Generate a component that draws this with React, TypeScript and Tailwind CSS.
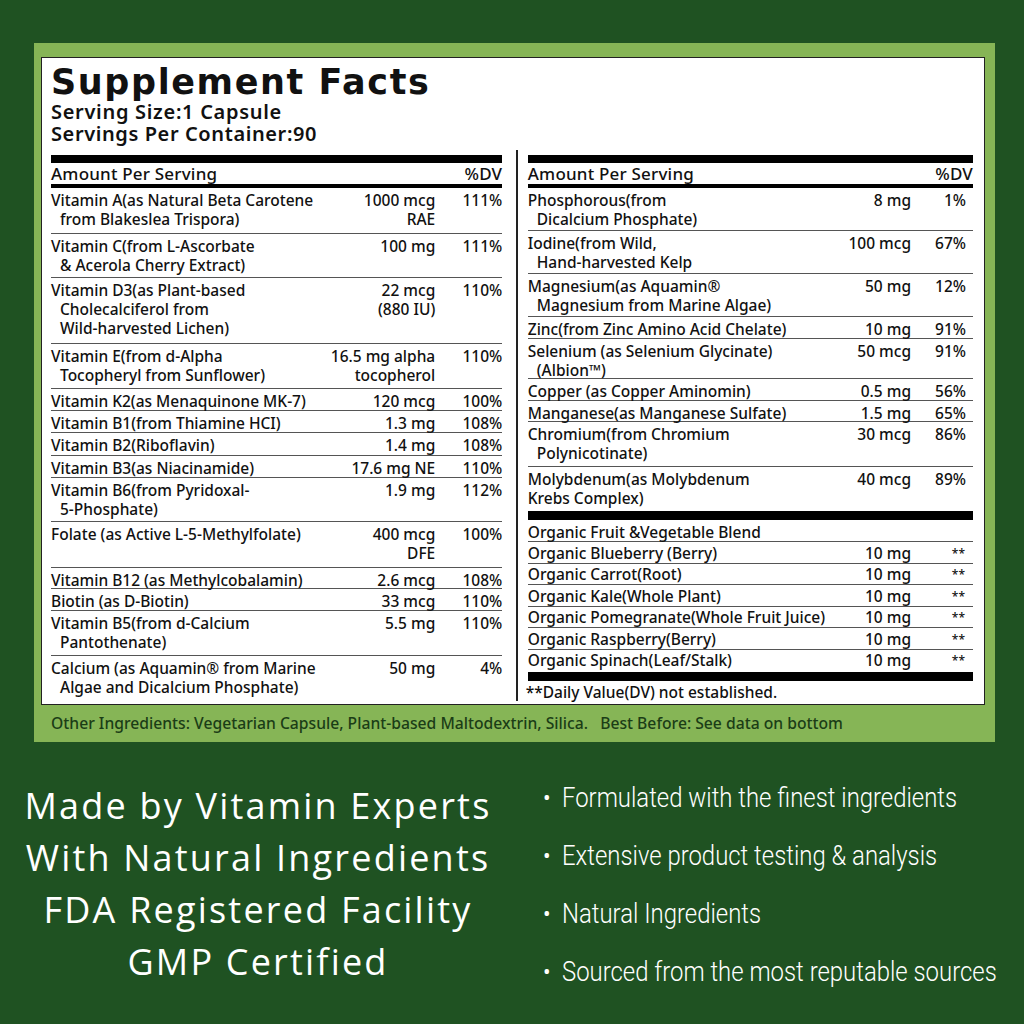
import React from 'react';

type Row = { n: string[]; a: string[]; d: string; h: string; last?: boolean; flat?: boolean };

const LEFT: Row[] = [
  { n: ['Vitamin A(as Natural Beta Carotene', 'from Blakeslea Trispora)'], a: ['1000 mcg', 'RAE'], d: '111%', h: 'h-[46px]' },
  { n: ['Vitamin C(from L-Ascorbate', '& Acerola Cherry Extract)'], a: ['100 mg'], d: '111%', h: 'h-[44px]' },
  { n: ['Vitamin D3(as Plant-based', 'Cholecalciferol from', 'Wild-harvested Lichen)'], a: ['22 mcg', '(880 IU)'], d: '110%', h: 'h-[66px]' },
  { n: ['Vitamin E(from d-Alpha', 'Tocopheryl from Sunflower)'], a: ['16.5 mg alpha', 'tocopherol'], d: '110%', h: 'h-[45px]' },
  { n: ['Vitamin K2(as Menaquinone MK-7)'], a: ['120 mcg'], d: '100%', h: 'h-[22px]' },
  { n: ['Vitamin B1(from Thiamine HCI)'], a: ['1.3 mg'], d: '108%', h: 'h-[22px]' },
  { n: ['Vitamin B2(Riboflavin)'], a: ['1.4 mg'], d: '108%', h: 'h-[23px]' },
  { n: ['Vitamin B3(as Niacinamide)'], a: ['17.6 mg NE'], d: '110%', h: 'h-[22px]' },
  { n: ['Vitamin B6(from Pyridoxal-', '5-Phosphate)'], a: ['1.9 mg'], d: '112%', h: 'h-[44px]' },
  { n: ['Folate (as Active L-5-Methylfolate)'], a: ['400 mcg', 'DFE'], d: '100%', h: 'h-[46px]' },
  { n: ['Vitamin B12 (as Methylcobalamin)'], a: ['2.6 mcg'], d: '108%', h: 'h-[21px]' },
  { n: ['Biotin (as D-Biotin)'], a: ['33 mcg'], d: '110%', h: 'h-[22px]' },
  { n: ['Vitamin B5(from d-Calcium', 'Pantothenate)'], a: ['5.5 mg'], d: '110%', h: 'h-[45px]' },
  { n: ['Calcium (as Aquamin® from Marine', 'Algae and Dicalcium Phosphate)'], a: ['50 mg'], d: '4%', h: 'h-[45px]', last: true },
];

const RIGHT: Row[] = [
  { n: ['Phosphorous(from', 'Dicalcium Phosphate)'], a: ['8 mg'], d: '1%', h: 'h-[43px]' },
  { n: ['Iodine(from Wild,', 'Hand-harvested Kelp'], a: ['100 mcg'], d: '67%', h: 'h-[43px]' },
  { n: ['Magnesium(as Aquamin®', 'Magnesium from Marine Algae)'], a: ['50 mg'], d: '12%', h: 'h-[43px]' },
  { n: ['Zinc(from Zinc Amino Acid Chelate)'], a: ['10 mg'], d: '91%', h: 'h-[22px]' },
  { n: ['Selenium (as Selenium Glycinate)', '(Albion™)'], a: ['50 mcg'], d: '91%', h: 'h-[40px]' },
  { n: ['Copper (as Copper Aminomin)'], a: ['0.5 mg'], d: '56%', h: 'h-[22px]' },
  { n: ['Manganese(as Manganese Sulfate)'], a: ['1.5 mg'], d: '65%', h: 'h-[21px]' },
  { n: ['Chromium(from Chromium', 'Polynicotinate)'], a: ['30 mcg'], d: '86%', h: 'h-[45px]' },
  { n: ['Molybdenum(as Molybdenum', 'Krebs Complex)'], a: ['40 mcg'], d: '89%', h: 'h-[44px]', last: true, flat: true },
];

const BLEND = [
  'Organic Blueberry (Berry)',
  'Organic Carrot(Root)',
  'Organic Kale(Whole Plant)',
  'Organic Pomegranate(Whole Fruit Juice)',
  'Organic Raspberry(Berry)',
  'Organic Spinach(Leaf/Stalk)',
];

const BULLETS = [
  'Formulated with the finest ingredients',
  'Extensive product testing & analysis',
  'Natural Ingredients',
  'Sourced from the most reputable sources',
];

const FactRow = ({ r, dvW }: { r: Row; dvW: string }) => (
  <div className={`flex pt-[2.5px] ${r.h} ${r.last ? '' : 'border-b-[1.5px] border-[#555]'}`}>
    <div className="flex-1 whitespace-nowrap">
      {r.n.map((t, i) => (
        <div key={i} className={i > 0 && !r.flat ? 'pl-[9px]' : ''}>{t}</div>
      ))}
    </div>
    <div className="text-right whitespace-nowrap">
      {r.a.map((t, i) => <div key={i}>{t}</div>)}
    </div>
    <div className={`${dvW} text-right`}>{r.d}</div>
  </div>
);

const TableHead = () => (
  <>
    <div className="h-[8px] bg-black" />
    <div className="flex h-[21px] items-center justify-between text-[17px] tracking-[0.2px]">
      <span>Amount Per Serving</span>
      <span>%DV</span>
    </div>
    <div className="h-[4px] bg-black" />
  </>
);

export default function App() {
  return (
    <div className="w-[1024px] h-[1024px] bg-[#1f5222] pt-[43px] font-['Noto_Sans',sans-serif]">
      <div className="ml-[34px] w-[961px] bg-[#86b556] pt-[14px] pl-[7px] pr-[10px]">
        <div className="h-[648px] border border-[#222] bg-white pl-[9px] pr-[11px] text-[15.5px] leading-[19px] font-medium text-[#111]">
          <div className="pt-[4px] leading-none">
            <div className="text-[35px] font-bold font-['DejaVu_Sans',sans-serif] leading-[40px] tracking-[1.6px]">Supplement Facts</div>
            <div className="text-[20px] font-semibold leading-[22px] mt-[-1px] tracking-[0.7px]">Serving Size:1 Capsule</div>
            <div className="text-[20px] font-semibold leading-[22px] tracking-[0.6px]">Servings Per Container:90</div>
          </div>
          <div className="flex mt-[5px] h-[554px]">
            <div className="w-[452px] pt-[5px]">
              <TableHead />
              {LEFT.map((r, i) => <FactRow key={i} r={r} dvW="w-[67px]" />)}
            </div>
            <div className="ml-[14px] mr-[10px] w-[1.5px] bg-[#222] mb-[3px]" />
            <div className="w-[446px] pt-[5px]">
              <TableHead />
              {RIGHT.map((r, i) => <FactRow key={i} r={r} dvW="w-[62px] pr-[7px]" />)}
              <div className="h-[9px] bg-black" />
              <div className="h-[22px] pt-[2.5px] border-b-[1.5px] border-[#555]">Organic Fruit &amp;Vegetable Blend</div>
              {BLEND.map((t, i) => (
                <div key={i} className={`flex h-[21.5px] pt-[1.5px] ${i < BLEND.length - 1 ? 'border-b-[1.5px] border-[#555]' : ''}`}>
                  <div className="flex-1 whitespace-nowrap">{t}</div>
                  <div className="w-[70px] text-right">10 mg</div>
                  <div className="w-[62px] pr-[8px] text-right text-[12px]">**</div>
                </div>
              ))}
              <div className="h-[9px] bg-black mt-[1px]" />
              <div className="pt-[2px] -ml-[2px]">**Daily Value(DV) not established.</div>
            </div>
          </div>
        </div>
        <div className="h-[37px] flex items-center pl-[10px] text-[15.7px] font-medium text-[#1b3d16] whitespace-pre">
          Other Ingredients: Vegetarian Capsule, Plant-based Maltodextrin, Silica.   Best Before: See data on bottom
        </div>
      </div>
      <div className="flex pt-[38px]">
        <div className="w-[516px] shrink-0 flex flex-col items-center text-white text-[36px] leading-[52px] font-['Open_Sans',sans-serif] tracking-[2.2px]">
          <div>Made by Vitamin Experts</div>
          <div>With Natural Ingredients</div>
          <div>FDA Registered Facility</div>
          <div>GMP Certified</div>
        </div>
        <div className="flex flex-col pl-[27px] -mt-[11px] text-white min-w-0">
          {BULLETS.map((b, i) => (
            <div key={i} className="flex items-center h-[58px]">
              <span className="w-[19px] shrink-0 text-[20px]">•</span>
              <span className="font-['Roboto',sans-serif] font-light text-[27px] scale-x-[0.885] origin-left whitespace-nowrap">{b}</span>
            </div>
          ))}
        </div>
      </div>
    </div>
  );
}
